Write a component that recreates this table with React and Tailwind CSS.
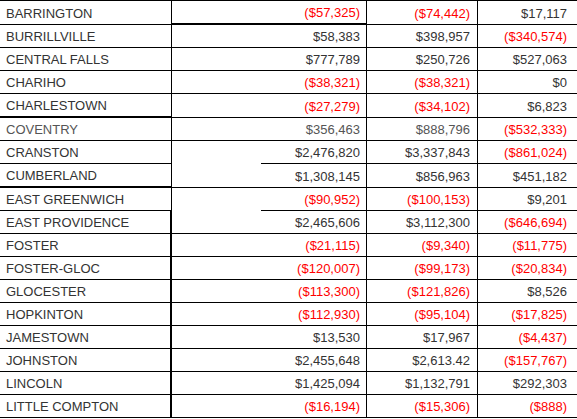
import React from "react";

const R = "r";
const rows = [
  { name: "BARRINGTON", tall: true, v: [["($57,325)", R], ["($74,442)", R], ["$17,117"]] },
  { name: "BURRILLVILLE", v: [["$58,383"], ["$398,957"], ["($340,574)", R]] },
  { name: "CENTRAL FALLS", v: [["$777,789"], ["$250,726"], ["$527,063"]] },
  { name: "CHARIHO", v: [["($38,321)", R], ["($38,321)", R], ["$0"]] },
  { name: "CHARLESTOWN", tall: true, v: [["($27,279)", R], ["($34,102)", R], ["$6,823"]] },
  { name: "COVENTRY", light: true, v: [["$356,463"], ["$888,796"], ["($532,333)", R]] },
  { name: "CRANSTON", v: [["$2,476,820"], ["$3,337,843"], ["($861,024)", R]] },
  { name: "CUMBERLAND", tall: true, v: [["$1,308,145"], ["$856,963"], ["$451,182"]] },
  { name: "EAST GREENWICH", v: [["($90,952)", R], ["($100,153)", R], ["$9,201"]] },
  { name: "EAST PROVIDENCE", v: [["$2,465,606"], ["$3,112,300"], ["($646,694)", R]] },
  { name: "FOSTER", v: [["($21,115)", R], ["($9,340)", R], ["($11,775)", R]] },
  { name: "FOSTER-GLOC", v: [["($120,007)", R], ["($99,173)", R], ["($20,834)", R]] },
  { name: "GLOCESTER", v: [["($113,300)", R], ["($121,826)", R], ["$8,526"]] },
  { name: "HOPKINTON", v: [["($112,930)", R], ["($95,104)", R], ["($17,825)", R]] },
  { name: "JAMESTOWN", v: [["$13,530"], ["$17,967"], ["($4,437)", R]] },
  { name: "JOHNSTON", v: [["$2,455,648"], ["$2,613.42"], ["($157,767)", R]] },
  { name: "LINCOLN", v: [["$1,425,094"], ["$1,132,791"], ["$292,303"]] },
  { name: "LITTLE COMPTON", v: [["($16,194)", R], ["($15,306)", R], ["($888)", R]] },
];

function Val({ val, className }) {
  const [text, red] = val;
  return (
    <div className={className}>
      <span className={red ? "text-[#ff0000]" : ""}>{text}</span>
    </div>
  );
}

export default function App() {
  return (
    <div className="w-[577px] h-[419px] overflow-hidden bg-white font-['Liberation_Sans',Arial,Helvetica,sans-serif] text-[13px] text-[#333333]">
      <div className="border-t border-black">
        {rows.map((r, i) => {
          const idx = i + 1;
          const aBottom = idx === 5 || idx === 8 ? "border-b-2" : "border-b";
          const aRight = idx >= 10 ? "border-r-2" : "border-r";
          const bBottom = idx === 1 ? "border-b-2" : idx === 7 || idx === 9 ? "border-b-0" : "border-b";
          const cBottom = idx === 1 ? "border-b-2" : "border-b";
          const rowColor = r.light ? "text-[#555555]" : "";
          return (
            <div key={r.name} className={`flex ${r.tall ? "h-[24px]" : "h-[23px]"} ${rowColor}`}>
              <div className={`w-[172px] shrink-0 flex items-center pt-[2px] pl-[6px] border-black ${aBottom} ${aRight}`}>
                {r.name}
              </div>
              <div className={`w-[89px] shrink-0 border-black ${bBottom}`} />
              <Val
                val={r.v[0]}
                className={`w-[106px] shrink-0 flex items-center justify-end pt-[2px] pr-[6px] border-black border-r ${cBottom}`}
              />
              <Val
                val={r.v[1]}
                className="w-[111px] shrink-0 flex items-center justify-end pt-[2px] pr-[7px] border-black border-r border-b"
              />
              <Val
                val={r.v[2]}
                className="flex-1 flex items-center justify-end pt-[2px] pr-[10px] border-black border-b"
              />
            </div>
          );
        })}
      </div>
    </div>
  );
}
